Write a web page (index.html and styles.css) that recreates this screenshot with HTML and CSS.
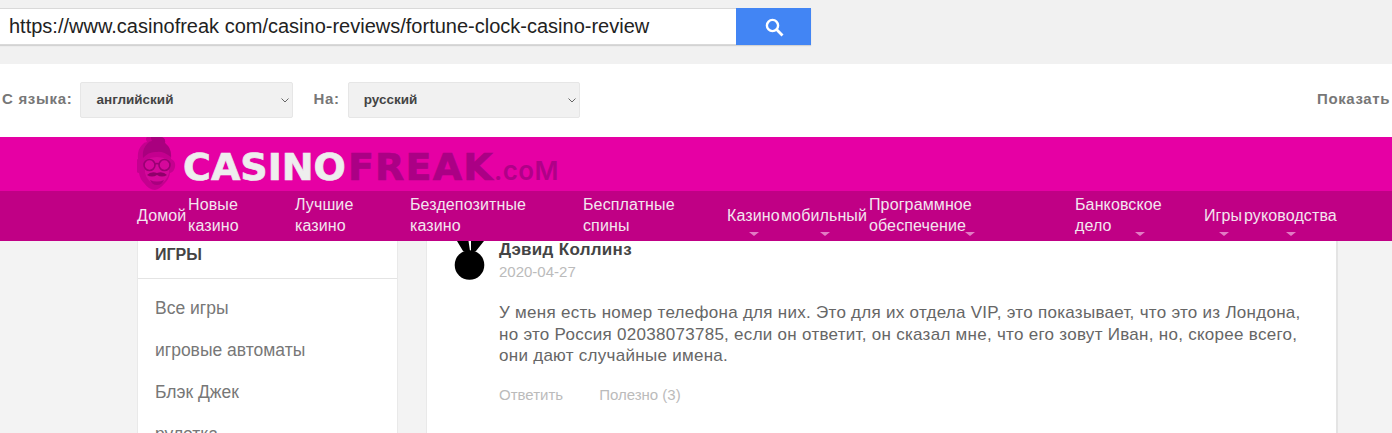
FILE: index.html
```html
<!DOCTYPE html>
<html lang="ru">
<head>
<meta charset="utf-8">
<title>CasinoFreak</title>
<link rel="stylesheet" href="styles.css">
</head>
<body>
<div class="urlbar">
  <div class="urlform">
    <input class="urlinput" type="text" value="https://www.casinofreak com/casino-reviews/fortune-clock-casino-review">
    <button class="urlbtn" type="button" aria-label="Поиск">
      <svg width="22" height="22" viewBox="0 0 22 22" fill="none" stroke="#fff"><circle cx="9.5" cy="9.5" r="5.6" stroke-width="2.4"/><path d="M13.6 13.6 L19.5 19.5" stroke-width="2.8"/></svg>
    </button>
  </div>
</div>
<div class="langbar">
  <label class="langlabel">С языка:</label>
  <div class="selectwrap selectwrap-from">
    <select class="langselect"><option>английский</option></select>
    <svg class="chevron" width="8" height="5" viewBox="0 0 8 5" fill="none" stroke="#666" stroke-width="1"><path d="M.5.5 4 4 7.5.5"/></svg>
  </div>
  <label class="langlabel langlabel-to">На:</label>
  <div class="selectwrap selectwrap-to">
    <select class="langselect"><option>русский</option></select>
    <svg class="chevron" width="8" height="5" viewBox="0 0 8 5" fill="none" stroke="#666" stroke-width="1"><path d="M.5.5 4 4 7.5.5"/></svg>
  </div>
  <span class="show">Показать</span>
</div>
<header class="site">
  <div class="brandrow">
    <div class="brand">
      <svg class="mascot" width="40" height="54" viewBox="0 0 40 54">
        <path fill="#c4008f" d="M14 0h10q5 1 4 6l3 3q4 5 3 13q5 2 4 8q-1 5-5 6q-1 6-5 10q-5 6-10 7q-6 0-11-7q-4-4-5-10q-4-1-5-6q-1-6 4-8q-1-9 4-14q2-3 5-3q-2-4 0-5z"/>
        <path fill="#a9007f" d="M14 0h10q5 1 4 6l3 3q3 4 3 11q-8-6-14-5q-8-1-14 6q-1-9 4-14q2-3 5-3q-2-4 0-5z"/>
        <path fill="#d5089b" d="M8 23q12-6 24 0v13q-2 9-12 12q-10-3-12-12z"/>
        <g fill="none" stroke="#9a0074" stroke-width="1.6">
          <circle cx="12.5" cy="28" r="5.5"/>
          <circle cx="27.5" cy="28" r="5.5"/>
          <path d="M18 27q2-1 4 0"/>
        </g>
        <path fill="#8f006b" d="M20 36q6-2 10 2q-5 3-10 0q-5 3-10 0q4-4 10-2z"/>
        <path fill="#a9007f" d="M13 43q7 3 14 0q-2 5-7 5q-5 0-7-5z"/>
      </svg>
      <div class="wordmark"><span class="wm-a">CASINO</span><span class="wm-b">FREAK</span><span class="wm-c">.coM</span></div>
    </div>
  </div>
  <nav class="nav">
    <div class="navgrid">
      <a class="navitem">Домой</a>
      <a class="navitem">Новые<br>казино</a>
      <a class="navitem">Лучшие<br>казино</a>
      <a class="navitem">Бездепозитные<br>казино</a>
      <a class="navitem">Бесплатные<br>спины</a>
      <a class="navitem has-caret">Казино</a>
      <a class="navitem has-caret">мобильный</a>
      <a class="navitem has-caret two-line caret-left">Программное<br>обеспечение</a>
      <a class="navitem has-caret two-line">Банковское<br>дело</a>
      <a class="navitem has-caret">Игры</a>
      <a class="navitem has-caret">руководства</a>
    </div>
  </nav>
</header>
<main class="content">
  <aside class="sidebar">
    <h3 class="sidehead">ИГРЫ</h3>
    <ul class="sidelist">
      <li>Все игры</li>
      <li>игровые автоматы</li>
      <li>Блэк Джек</li>
      <li>рулетка</li>
    </ul>
  </aside>
  <section class="card">
    <svg class="avatar" width="32" height="41" viewBox="0 0 32 41">
      <path fill="#000" d="M3 0H14.5L16 10H9ZM17 0H30L22 10H17Z"/>
      <circle cx="15.5" cy="24" r="14.8" fill="#000"/>
    </svg>
    <div class="review">
      <div class="author">Дэвид Коллинз</div>
      <div class="date">2020-04-27</div>
      <p class="body">У меня есть номер телефона для них. Это для их отдела VIP, это показывает, что это из Лондона, но это Россия 02038073785, если он ответит, он сказал мне, что его зовут Иван, но, скорее всего, они дают случайные имена.</p>
      <div class="actions"><span>Ответить</span><span>Полезно (3)</span></div>
    </div>
  </section>
</main>
</body>
</html>
```
FILE: styles.css
```css
* { box-sizing: border-box; }
html, body { margin: 0; height: 433px; overflow: hidden; background: #fff; }
body { font-family: "Liberation Sans", Arial, sans-serif; }

.urlbar { height: 64px; background: #f1f1f1; padding-top: 8px; }
.urlform { display: flex; width: 811px; height: 37px; box-shadow: 0 1px 1px rgba(0,0,0,.12); }
.urlinput {
  width: 736px; height: 37px; padding: 0 0 0 9px; margin: 0;
  border: 0; border-top: 1px solid #d9d9d9; border-bottom: 1px solid #d9d9d9;
  outline: 0; background: #fff; color: #222;
  font: 20px "Liberation Sans", Arial, sans-serif;
}
.urlbtn {
  width: 75px; height: 37px; border: 0; padding: 0; background: #4285f4;
  display: flex; align-items: center; justify-content: center;
}

.langbar { height: 73px; display: flex; align-items: center; padding: 0 2px 2px 2px; background: #fff; }
.langlabel { font-size: 15px; font-weight: 700; color: #777; letter-spacing: .7px; margin-bottom: 3px; }
.langlabel-to { margin-left: 20px; }
.selectwrap { position: relative; height: 36px; margin-left: 8px; }
.selectwrap-from { width: 213px; }
.selectwrap-to { width: 232px; }
.langselect {
  display: block; width: 100%; height: 36px; padding-left: 15px;
  appearance: none; -webkit-appearance: none;
  background: #f1f1f1; border: 1px solid #e6e6e6; border-radius: 2px;
  color: #444; font: 700 13.5px "Liberation Sans", Arial, sans-serif;
}
.chevron { position: absolute; right: 4px; top: 16px; }
.show { margin-left: auto; font-size: 15px; font-weight: 700; color: #777; letter-spacing: .6px; margin-bottom: 3px; }

.brandrow { height: 54px; background: #e600a4; padding-left: 137px; }
.brand { display: flex; align-items: flex-start; height: 54px; }
.mascot { flex: none; }
.wordmark { margin-left: 6px; padding-top: 7px; font-family: "DejaVu Sans", "Liberation Sans", sans-serif; font-weight: 700; font-size: 38px; line-height: 46px; white-space: nowrap; -webkit-text-stroke: .7px currentColor; }
.wm-a { color: #eeeeee; }
.wm-b { color: #ab0085; letter-spacing: 1.2px; margin-left: 2px; }
.wm-c { color: #b00088; font-family: Inter, sans-serif; font-size: 26px; font-weight: 600; letter-spacing: .4px; -webkit-text-stroke: 0; }

.nav { height: 50px; background: #c00085; padding-left: 137px; }
.navgrid {
  display: grid; height: 50px; align-items: center;
  grid-template-columns: 51px 107px 115px 173px 144px 54px 88px 206px 129px 40px 94px;
}
.navitem { position: relative; display: block; color: #f3e6ef; font-size: 16px; letter-spacing: .12px; line-height: 21px; white-space: nowrap; padding-bottom: 2px; }
.has-caret::after {
  content: ""; position: absolute; left: calc(50% - 5px); bottom: -8px;
  border-left: 5px solid transparent; border-right: 5px solid transparent; border-top: 4px solid #e27cc4;
}
.navitem.two-line::after { bottom: 2px; }
.navitem.caret-left::after { left: calc(50% - 7px); }

.content { display: flex; height: 192px; background: #f3f3f3; padding-left: 137px; overflow: hidden; }
.sidebar { width: 261px; flex: none; background: #fff; border-left: 1px solid #e9e9e9; border-right: 1px solid #e9e9e9; }
.sidehead { margin: 0; height: 38px; padding: 6px 0 0 17px; font-size: 16px; line-height: 16px; color: #444; font-weight: 700; border-bottom: 1px solid #e4e4e4; }
.sidelist { list-style: none; margin: 0; padding: 8px 0 0 17px; color: #777; font-size: 17.5px; }
.sidelist li { height: 42px; line-height: 42px; }

.card { width: 912px; flex: none; margin-left: 28px; background: #fff; border-left: 1px solid #e9e9e9; border-right: 2px solid #e4e4e4; padding-left: 27px; display: flex; align-items: flex-start; }
.avatar { flex: none; }
.review { margin-left: 13px; }
.author { font-size: 17px; letter-spacing: .3px; font-weight: 700; color: #444; line-height: 18px; }
.date { font-size: 15px; color: #bbb; line-height: 16px; margin-top: 5px; }
.body { margin: 22px 0 0; width: 805px; color: #666; font-size: 17px; letter-spacing: .28px; line-height: 21.5px; }
.actions { margin-top: 19px; font-size: 15px; color: #bbb; display: flex; gap: 36px; }
```
